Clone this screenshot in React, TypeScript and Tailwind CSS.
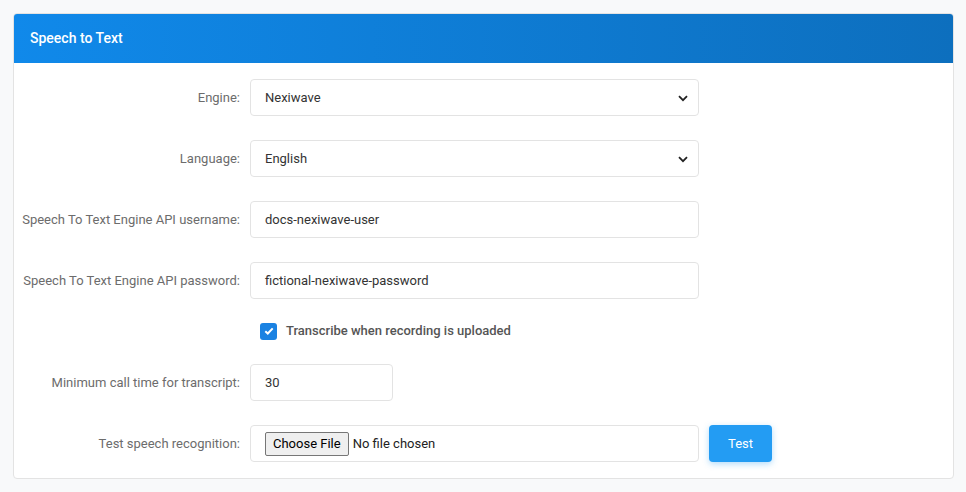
import React from "react";

const Chevron = () => (
  <svg width="10" height="7" viewBox="0 0 10 7" className="absolute right-[10px] top-[15px]">
    <path d="M1 1.2 L5 5.2 L9 1.2" fill="none" stroke="#222" strokeWidth="1.8" />
  </svg>
);

const Label = ({ children }: { children: React.ReactNode }) => (
  <div className="w-[236px] text-right pr-[10px] text-[13px] text-[#6c6c6c]">{children}</div>
);

const Box = ({ children, w = "w-[449px]", chevron = false }: { children: React.ReactNode; w?: string; chevron?: boolean }) => (
  <div className={`relative ${w} h-[37px] border border-[#e3e3e3] rounded-[4px] bg-white flex items-center pl-[14px] text-[13px] text-[#333]`}>
    {children}
    {chevron && <Chevron />}
  </div>
);

export default function App() {
  return (
    <div className="w-[966px] h-[492px] bg-[#f8f9fa] pt-[13px] pl-[13px]" style={{ fontFamily: "Roboto, sans-serif" }}>
      <div className="w-[941px] h-[466px] bg-white border border-[#e3e3e3] rounded-[4px] overflow-hidden">
        <div className="h-[49px] bg-gradient-to-r from-[#1089ea] to-[#0d6fbe] flex items-center pl-[16px] text-white text-[14px] font-medium">
          Speech to Text
        </div>
        <div className="flex flex-col pt-[16px]">
          <div className="flex items-center h-[37px]">
            <Label>Engine:</Label>
            <Box chevron>Nexiwave</Box>
          </div>
          <div className="flex items-center h-[37px] mt-[24px]">
            <Label>Language:</Label>
            <Box chevron>English</Box>
          </div>
          <div className="flex items-center h-[37px] mt-[24px]">
            <Label>Speech To Text Engine API username:</Label>
            <Box>docs-nexiwave-user</Box>
          </div>
          <div className="flex items-center h-[37px] mt-[24px]">
            <Label>Speech To Text Engine API password:</Label>
            <Box>fictional-nexiwave-password</Box>
          </div>
          <div className="flex items-center h-[18px] mt-[23px]">
            <div className="w-[246px]" />
            <div className="w-[17px] h-[17px] rounded-[3px] bg-[#1a82e2] flex items-center justify-center">
              <svg width="10" height="8" viewBox="0 0 10 8"><path d="M1.3 4.2 L3.8 6.5 L8.7 1.4" fill="none" stroke="white" strokeWidth="2" /></svg>
            </div>
            <span className="ml-[9px] text-[13px] font-medium text-[#555]">Transcribe when recording is uploaded</span>
          </div>
          <div className="flex items-center h-[37px] mt-[24px]">
            <Label>Minimum call time for transcript:</Label>
            <Box w="w-[143px]">30</Box>
          </div>
          <div className="flex items-center h-[37px] mt-[24px]">
            <Label>Test speech recognition:</Label>
            <div className="w-[449px] h-[37px] border border-[#e3e3e3] rounded-[4px] flex items-center pl-[14px] text-[13px] text-[#222]">
              <span className="h-[24px] px-[7px] border border-[#767676] rounded-[2px] bg-[#efefef] flex items-center text-[13px] text-black">Choose File</span>
              <span className="ml-[4px]">No file chosen</span>
            </div>
            <button className="ml-[10px] w-[63px] h-[37px] rounded-[4px] bg-[#239cf3] text-white text-[13px] shadow-[0_2px_6px_rgba(35,156,243,0.35)]">Test</button>
          </div>
        </div>
      </div>
    </div>
  );
}
